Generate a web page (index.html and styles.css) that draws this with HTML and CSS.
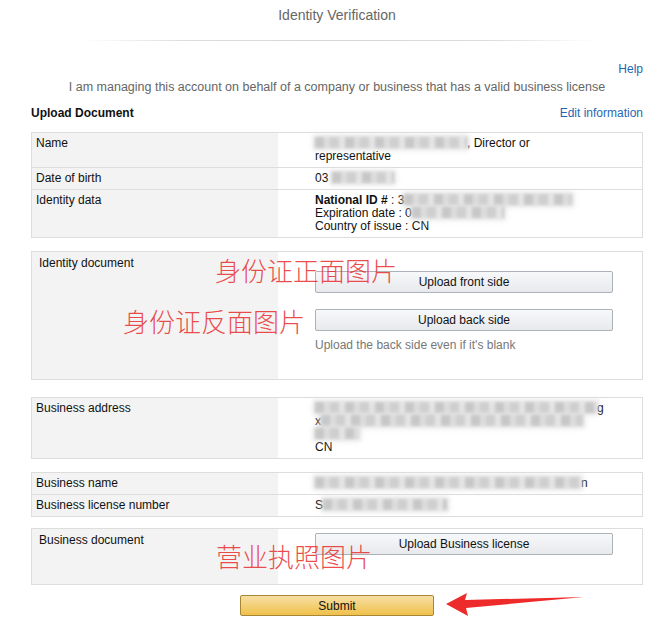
FILE: index.html
```html
<!DOCTYPE html>
<html lang="en">
<head>
    <meta charset="UTF-8">
    <meta name="viewport" content="width=device-width, initial-scale=1.0">
    <title>Identity Verification</title>
    <link rel="stylesheet" href="styles.css">
</head>
<body>
    <div class="page">
        <div class="title">Identity Verification</div>
        <div class="divider"></div>

        <div class="help"><a href="#">Help</a></div>
        <div class="intro">I am managing this account on behalf of a company or business that has a valid business license</div>

        <div class="section-head">
            <span class="section-title">Upload Document</span>
            <a href="#">Edit information</a>
        </div>

        <div class="info">
            <div class="row">
                <div class="label">Name</div>
                <div class="value"><span class="blur" style="width:152px"></span>, Director or<br>representative</div>
            </div>
            <div class="row">
                <div class="label">Date of birth</div>
                <div class="value">03 <span class="blur" style="width:62px"></span></div>
            </div>
            <div class="row">
                <div class="label">Identity data</div>
                <div class="value">
                    <b>National ID #</b> : 3<span class="blur" style="width:168px"></span><br>
                    Expiration date : 0<span class="blur" style="width:92px"></span><br>
                    Country of issue : CN
                </div>
            </div>
        </div>

        <div class="info doc id-doc">
            <div class="row">
                <div class="label">Identity document</div>
                <div class="value">
                    <button class="btn">Upload front side</button>
                    <button class="btn back">Upload back side</button>
                    <div class="hint">Upload the back side even if it's blank</div>
                </div>
            </div>
        </div>

        <div class="info address">
            <div class="row">
                <div class="label">Business address</div>
                <div class="value">
                    <span class="blur" style="width:282px"></span>g<br>
                    x<span class="blur" style="width:262px"></span><br>
                    <span class="blur" style="width:44px"></span><br>
                    CN
                </div>
            </div>
        </div>

        <div class="info business">
            <div class="row">
                <div class="label">Business name</div>
                <div class="value"><span class="blur" style="width:266px"></span>n</div>
            </div>
            <div class="row">
                <div class="label">Business license number</div>
                <div class="value">S<span class="blur" style="width:124px"></span></div>
            </div>
        </div>

        <div class="info doc biz-doc">
            <div class="row">
                <div class="label">Business document</div>
                <div class="value">
                    <button class="btn">Upload Business license</button>
                </div>
            </div>
        </div>

        <div class="actions">
            <button class="submit">Submit</button>
        </div>

        <!-- annotations drawn over the form -->
        <div class="note note-front">身份证正面图片</div>
        <div class="note note-back">身份证反面图片</div>
        <div class="note note-license">营业执照图片</div>
        <svg class="arrow" width="140" height="26" viewBox="0 0 140 26">
            <polygon points="0,11 21,0 19,7 138,4 20,15 22,23" fill="#ee2b2b"/>
        </svg>
    </div>
</body>
</html>
```

FILE: styles.css
```css
body {
    margin: 0;
    background: #fff;
    font-family: "Liberation Sans", Arial, sans-serif;
    font-size: 12px;
    color: #111;
}
a {
    color: #1f67b4;
    text-decoration: none;
}
.page {
    position: relative;
    width: 612px;
    margin-left: 31px;
    padding-bottom: 20px;
}
.title {
    padding-top: 7px;
    text-align: center;
    font-size: 14px;
    line-height: 16px;
    color: #666;
}
.divider {
    height: 1px;
    margin: 17px 48px 0 51px;
    background: linear-gradient(to right, rgba(220, 220, 220, 0), #ddd 20%, #d6d6d6 50%, #ddd 80%, rgba(220, 220, 220, 0));
    box-shadow: 0 6px 10px rgba(0, 0, 0, 0.025);
}
.help {
    margin-top: 21px;
    text-align: right;
    line-height: 14px;
}
.intro {
    margin-top: 4px;
    text-align: center;
    font-size: 12.5px;
    line-height: 14px;
    color: #666;
}
.section-head {
    display: flex;
    justify-content: space-between;
    margin-top: 12px;
    line-height: 14px;
}
.section-title {
    font-weight: bold;
}
.info {
    margin-top: 12px;
    border: 1px solid #ddd;
}
.row {
    display: grid;
    grid-template-columns: 246px 1fr;
    border-top: 1px solid #ddd;
}
.row:first-child {
    border-top: none;
}
.label {
    background: #f3f3f3;
    padding: 4px 4px;
    line-height: 13px;
}
.value {
    padding: 4px 30px 4px 37px;
    line-height: 13px;
}
.blur {
    display: inline-block;
    height: 11px;
    vertical-align: -1px;
    background: repeating-linear-gradient(90deg, #c2c2c2 0 9px, #d9d9d9 9px 15px, #cacaca 15px 24px, #e2e2e2 24px 30px);
    box-shadow: 0 0 4px 2px rgba(215, 215, 215, 0.8);
    filter: blur(1.8px);
    opacity: 0.9;
}
.doc .label {
    padding: 5px 7px;
}
.id-doc {
    margin-top: 13px;
}
.id-doc .value {
    padding-top: 19px;
    padding-bottom: 27px;
}
.btn {
    display: block;
    width: 298px;
    height: 22px;
    padding: 0;
    border: 1px solid #adb1b8;
    border-radius: 2px;
    background: linear-gradient(#f7f8fa, #e7e9ec);
    font-family: "Liberation Sans", Arial, sans-serif;
    font-size: 12px;
    color: #111;
}
.btn.back {
    margin-top: 16px;
}
.hint {
    margin-top: 8px;
    color: #777;
}
.address {
    margin-top: 17px;
}
.business {
    margin-top: 13px;
}
.biz-doc {
    margin-top: 11px;
}
.biz-doc .value {
    padding-top: 4px;
    padding-bottom: 29px;
}
.actions {
    margin-top: 10px;
    text-align: center;
}
.submit {
    width: 194px;
    height: 21px;
    padding: 0;
    border: 1px solid #a88734;
    border-radius: 2px;
    background: linear-gradient(#f7dea4, #f0c14b);
    font-family: "Liberation Sans", Arial, sans-serif;
    font-size: 12px;
    color: #111;
}
.note {
    position: absolute;
    font-family: "Noto Sans CJK SC", sans-serif;
    font-size: 26px;
    font-weight: 300;
    line-height: 30px;
    color: rgba(232, 45, 45, 0.85);
    white-space: nowrap;
}
.note-front {
    left: 184px;
    top: 255px;
}
.note-back {
    left: 92px;
    top: 306px;
}
.note-license {
    left: 185px;
    top: 541px;
}
.arrow {
    position: absolute;
    left: 415px;
    top: 593px;
}
```
